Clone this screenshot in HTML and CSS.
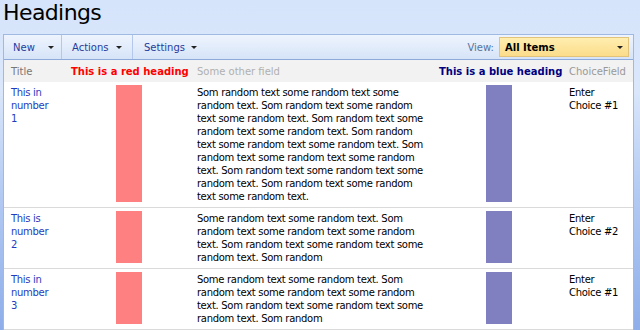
FILE: index.html
```html
<!DOCTYPE html>
<html lang="en">
  <head>
    <meta charset="UTF-8" />
    <meta name="viewport" content="width=device-width, initial-scale=1.0" />
    <title>Headings</title>
    <link rel="stylesheet" href="styles.css">
  </head>
  <body>
    <h1 class="page-title">Headings</h1>

    <div class="panel">
      <div class="toolbar">
        <div class="menu menu-new"><span>New</span><i class="arrow"></i></div>
        <div class="menu menu-actions"><span>Actions</span><i class="arrow"></i></div>
        <div class="menu menu-settings"><span>Settings</span><i class="arrow"></i></div>

        <div class="view">
          <span class="view-label">View:</span>
          <div class="view-select"><span>All Items</span><i class="arrow"></i></div>
        </div>
      </div>

      <table class="list">
        <thead>
          <tr>
            <th class="col-title">Title</th>
            <th class="col-red">This is a red heading</th>
            <th class="col-text">Some other field</th>
            <th class="col-blue">This is a blue heading</th>
            <th class="col-choice">ChoiceField</th>
          </tr>
        </thead>
        <tbody>
          <tr>
            <td><a href="#">This in number 1</a></td>
            <td class="bar-red"></td>
            <td>Som random text some random text some random text. Som random text some random text some random text. Som random text some random text some random text. Som random text some random text some random text. Som random text some random text some random text. Som random text some random text some random text. Som random text some random text some random text.</td>
            <td class="bar-blue"></td>
            <td>Enter Choice #1</td>
          </tr>
          <tr>
            <td><a href="#">This is number 2</a></td>
            <td class="bar-red"></td>
            <td>Some random text some random text. Som random text some random text some random text. Som random text some random text some random text. Som random</td>
            <td class="bar-blue"></td>
            <td>Enter Choice #2</td>
          </tr>
          <tr>
            <td><a href="#">This in number 3</a></td>
            <td class="bar-red"></td>
            <td>Some random text some random text. Som random text some random text some random text. Som random text some random text some random text. Som random</td>
            <td class="bar-blue"></td>
            <td>Enter Choice #1</td>
          </tr>
        </tbody>
      </table>
    </div>
  </body>
</html>
```

FILE: styles.css
```css
body {
  margin: 0;
  height: 330px;
  overflow: hidden;
  font-family: "DejaVu Sans", sans-serif;
  font-size: 10px;
  color: #000;
  background: linear-gradient(to bottom, #d6e4fb 0, #dae7fb 90px, #b4cbf3 190px, #8eaeea 330px);
}

.page-title {
  margin: 0;
  height: 34px;
  padding-left: 3px;
  font-size: 22px;
  font-weight: normal;
  line-height: 26px;
  letter-spacing: -0.6px;
  color: #000;
}

.panel {
  margin: 0 6px 0 3px;
  background: #fff;
  border-left: 1px solid #9fb9e2;
  border-right: 1px solid #9fb9e2;
}

/* toolbar */
.toolbar {
  display: flex;
  align-items: center;
  height: 24px;
  border-top: 1px solid #9fb9e2;
  border-bottom: 1px solid #8eaadb;
  background: linear-gradient(to bottom, #eef4fd, #d6e4f8);
}

.menu {
  display: flex;
  align-items: center;
  height: 100%;
  box-sizing: border-box;
  padding-left: 9px;
  color: #1f3c9e;
  border-right: 1px solid #b3c8ea;
}

.menu-new {
  width: 58px;
  gap: 13px;
}

.menu-actions {
  width: 71px;
  padding-left: 10px;
  gap: 7px;
}

.menu-settings {
  width: 72px;
  padding-left: 11px;
  gap: 6px;
  border-right: 0;
}

.arrow {
  display: inline-block;
  width: 0;
  height: 0;
  border-top: 3px solid #222;
  border-left: 3px solid transparent;
  border-right: 3px solid transparent;
}

.view {
  margin-left: auto;
  display: flex;
  align-items: center;
  gap: 5px;
  padding-right: 4px;
}

.view-label {
  color: #56739f;
}

.view-select {
  display: flex;
  align-items: center;
  justify-content: space-between;
  width: 118px;
  height: 18px;
  padding: 0 5px;
  border: 1px solid #e2c37a;
  background: linear-gradient(to bottom, #ffeeb0, #fbdc8a);
  font-weight: bold;
}

/* list */
.list {
  width: 100%;
  border-collapse: collapse;
  table-layout: fixed;
}

.list th {
  height: 22px;
  padding: 0 5px;
  background: #f2f2f2;
  font-weight: normal;
  text-align: left;
  white-space: nowrap;
}

.list td {
  padding: 4px 5px 4px;
  vertical-align: top;
  line-height: 13px;
  letter-spacing: -0.3px;
  border-bottom: 1px solid #dadada;
}

.list td:first-child,
.list th:first-child {
  padding-left: 7px;
  padding-right: 11px;
}

.col-title {
  width: 44px;
  color: #777;
}

.col-red {
  width: 116px;
  color: #ff0000;
  font-weight: bold !important;
}

.col-text {
  width: 232px;
  color: #b0b0b0;
}

.col-blue {
  width: 120px;
  color: #000080;
  font-weight: bold !important;
  text-align: right !important;
}

.col-choice {
  color: #999;
}

.list a {
  color: #1f3cbf;
  text-decoration: none;
}

.bar-red {
  background: linear-gradient(#ff8080, #ff8080) center 3px / 26px calc(100% - 8px) no-repeat;
}

.bar-blue {
  background: linear-gradient(#8080c0, #8080c0) center 3px / 26px calc(100% - 8px) no-repeat;
}
```
